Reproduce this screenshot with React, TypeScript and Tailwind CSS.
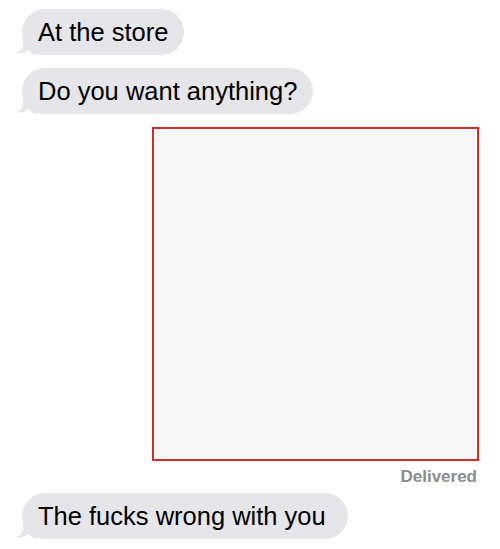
import React from "react";

const font = { fontFamily: '"Liberation Sans", Arial, sans-serif' };

const Tail = () => (
  <svg
    className="absolute -left-[7px] bottom-0"
    width="22"
    height="18"
    viewBox="0 0 22 18"
  >
    <path
      d="M8 0 L8 9 C8 12 5 15 0 16 C5 17 10 16 14 13 C16 16 19 18 22 18 L22 0 Z"
      fill="#e5e5ea"
    />
  </svg>
);

const Bubble = ({ text, wide }: { text: string; wide?: boolean }) => (
  <div className="relative self-start">
    <Tail />
    <div
      className={
        wide
          ? "relative rounded-[23px] bg-[#e5e5ea] pl-4 pr-[22px] py-[10px] text-[25.5px] leading-[26px] text-black"
          : "relative rounded-[23px] bg-[#e5e5ea] pl-4 pr-[16px] py-[10px] text-[25.5px] leading-[26px] text-black"
      }
    >
      {text}
    </div>
  </div>
);

export default function App() {
  return (
    <div className="w-[500px] h-[549px] bg-white overflow-hidden" style={font}>
      <div className="flex flex-col pl-[22px] pr-[21px] pt-[9px]">
        <Bubble text="At the store" />
        <div className="h-[13px]" />
        <Bubble text="Do you want anything?" />
        <div className="h-[13px]" />
        <div className="self-end w-[327px] h-[334px] border-2 border-[#d42b2b] bg-white p-[1px]">
          <div className="w-full h-full bg-[#f6f6f6] rounded-tr-[8px]" />
        </div>
        <div className="self-end mr-[2px] mt-[6px] text-[17px] leading-[20px] font-bold text-[#8c8c8c]">
          Delivered
        </div>
        <div className="h-[6px]" />
        <Bubble text="The fucks wrong with you" wide />
      </div>
    </div>
  );
}
